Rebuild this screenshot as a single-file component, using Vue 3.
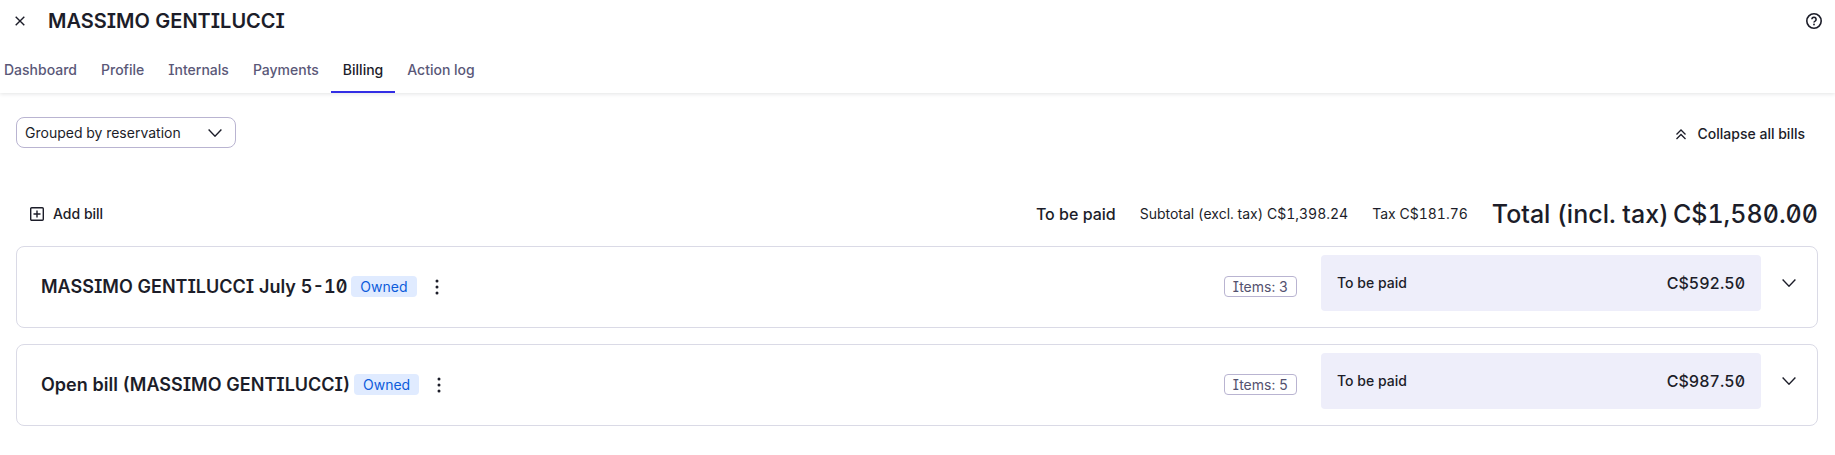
<script setup>
import { ref } from 'vue'

const tabs = ['Dashboard', 'Profile', 'Internals', 'Payments', 'Billing', 'Action log']
const activeTab = 'Billing'
const grouping = ref('reservation')
const bills = [
  { name: 'MASSIMO GENTILUCCI July 5-10', items: 3, amount: 'C$592.50' },
  { name: 'Open bill (MASSIMO GENTILUCCI)', items: 5, amount: 'C$987.50' },
]
</script>

<template>
  <div class="page">
    <header class="header">
      <div class="title-bar">
        <button class="icon-button" type="button" aria-label="Close">
          <svg width="10" height="10" viewBox="0 0 10 10"><path d="M.7.7l8.6 8.6M9.3.7L.7 9.3" /></svg>
        </button>
        <h1>MASSIMO GENTILUCCI</h1>
        <button class="icon-button help" type="button" aria-label="Help">
          <svg width="16" height="16" viewBox="0 0 16 16">
            <circle cx="8" cy="8" r="7.2" />
            <path d="M5.9 6.3a2.1 2.1 0 1 1 3.2 1.8c-.8.4-1.1.7-1.1 1.3" />
            <circle class="dot" cx="8" cy="11.5" r=".9" />
          </svg>
        </button>
      </div>
      <nav class="tabs" aria-label="Customer">
        <a v-for="tab in tabs" :key="tab" href="#" :class="{ active: tab === activeTab }">{{ tab }}</a>
      </nav>
    </header>

    <main class="content">
      <div class="toolbar">
        <div class="select">
          <select v-model="grouping" aria-label="Grouping">
            <option value="reservation">Grouped by reservation</option>
          </select>
          <svg width="14" height="8" viewBox="0 0 14 8"><path d="M.6.6L7 7.2 13.4.6" /></svg>
        </div>
        <button class="text-button collapse" type="button">
          <svg width="10" height="11" viewBox="0 0 10 11"><path d="M.5 5.5L5 1l4.5 4.5M.5 10L5 5.5l4.5 4.5" /></svg>
          Collapse all bills
        </button>
      </div>

      <div class="summary">
        <button class="text-button" type="button">
          <svg width="14" height="14" viewBox="0 0 14 14">
            <rect x=".7" y=".7" width="12.6" height="12.6" rx="1" />
            <path d="M7 3.5v7M3.5 7h7" />
          </svg>
          Add bill
        </button>
        <div class="totals">
          <span class="state">To be paid</span>
          <span>Subtotal (excl. tax) C$1,398.24</span>
          <span>Tax C$181.76</span>
          <strong class="total"><span>Total (incl. tax)</span><span>C$1,580.00</span></strong>
        </div>
      </div>

      <section class="bills">
        <article v-for="bill in bills" :key="bill.name" class="bill">
          <div class="bill-name">
            <h2>{{ bill.name }}</h2>
            <span class="badge owned">Owned</span>
            <button class="icon-button more" type="button" aria-label="More actions">
              <svg class="solid" width="4" height="16" viewBox="0 0 4 16">
                <circle cx="2" cy="2" r="1.5" /><circle cx="2" cy="8" r="1.5" /><circle cx="2" cy="14" r="1.5" />
              </svg>
            </button>
          </div>
          <span class="badge items">Items: {{ bill.items }}</span>
          <div class="amount">
            <span>To be paid</span>
            <strong>{{ bill.amount }}</strong>
          </div>
          <button class="icon-button expand" type="button" aria-label="Expand bill">
            <svg width="14" height="8" viewBox="0 0 14 8"><path d="M.6.6L7 7.2 13.4.6" /></svg>
          </button>
        </article>
      </section>
    </main>
  </div>
</template>

<style>
body {
  background: #fff;
}
</style>

<style scoped>
.page {
  color: #1c1d29;
  font-family: Inter, "Liberation Sans", sans-serif;
  font-size: 14px;
  line-height: 20px;
  font-feature-settings: "zero", "tnum", "cv08";
}
h1, h2 {
  margin: 0;
  font-weight: 600;
}
button, select {
  margin: 0;
  padding: 0;
  border: 0;
  background: none;
  color: inherit;
  font: inherit;
  font-feature-settings: inherit;
}
svg {
  display: block;
  flex: none;
  fill: none;
  stroke: currentColor;
  stroke-width: 1.4;
}
.dot, .solid {
  fill: currentColor;
  stroke: none;
}
.header {
  box-shadow: 0 1px 4px rgba(28, 29, 41, 0.12);
}
.title-bar {
  display: flex;
  align-items: center;
  height: 42px;
  padding: 0 8px;
}
.icon-button {
  display: flex;
  align-items: center;
  justify-content: center;
  width: 24px;
  height: 24px;
}
h1 {
  flex: 1;
  margin-left: 16px;
  font-size: 20px;
  line-height: 24px;
}
.help {
  margin-right: 1px;
}
.help svg {
  stroke-width: 1.6;
}
.tabs {
  display: flex;
  height: 51px;
  margin-left: -8px;
}
.tabs a {
  box-sizing: border-box;
  padding: 18px 12px 0;
  border-bottom: 2px solid transparent;
  color: #5a5878;
  font-weight: 500;
  text-decoration: none;
}
.tabs a.active {
  border-color: #332ee5;
  color: #1c1d29;
}
.content {
  padding: 24px 17px 24px 16px;
}
.toolbar, .summary {
  display: flex;
  justify-content: space-between;
}
.toolbar {
  align-items: flex-start;
}
.select {
  position: relative;
  width: 220px;
}
.select select {
  display: block;
  appearance: none;
  box-sizing: border-box;
  width: 100%;
  height: 31px;
  padding: 0 40px 0 8px;
  border: 1px solid #b9b4d1;
  border-radius: 8px;
}
.select svg {
  position: absolute;
  top: 12px;
  right: 14px;
  pointer-events: none;
}
.text-button {
  display: flex;
  align-items: center;
  gap: 9px;
  padding: 0 14px;
  font-weight: 500;
}
.collapse {
  gap: 12px;
  padding: 7px 13px;
}
.collapse svg {
  stroke-width: 1.3;
}
.summary {
  align-items: center;
  height: 32px;
  margin-top: 47px;
}
.totals {
  display: flex;
  align-items: center;
  gap: 24px;
}
.state {
  font-size: 16px;
  font-weight: 500;
}
.total {
  display: flex;
  gap: 4px;
  font-size: 25px;
  font-weight: 500;
}
.bills {
  display: grid;
  gap: 16px;
  margin-top: 16px;
}
.bill {
  display: flex;
  align-items: center;
  box-sizing: border-box;
  min-height: 82px;
  padding: 8px 16px 16px 24px;
  border: 1px solid #dadae6;
  border-radius: 8px;
}
.bill-name {
  display: flex;
  flex: 1;
  align-items: center;
  padding-top: 8px;
}
h2 {
  font-size: 18px;
  line-height: 24px;
}
.badge {
  padding: 0 9px;
  border-radius: 4px;
  line-height: 21px;
}
.owned {
  margin: 0 0 1px 4px;
  background: #e0ebff;
  color: #0d5cdb;
}
.more {
  margin-left: 8px;
}
.items {
  margin: 7px 24px 0 0;
  padding: 0 8px;
  border: 1px solid #b9b4d1;
  color: #54526f;
  line-height: 19px;
}
.amount {
  display: flex;
  flex: 0 0 25%;
  align-items: center;
  justify-content: space-between;
  box-sizing: border-box;
  height: 56px;
  padding: 0 16px;
  border-radius: 4px;
  background: #eeeefa;
  font-weight: 500;
}
.amount strong {
  font-size: 16px;
  font-weight: 500;
}
.expand {
  margin-left: 16px;
}
</style>
